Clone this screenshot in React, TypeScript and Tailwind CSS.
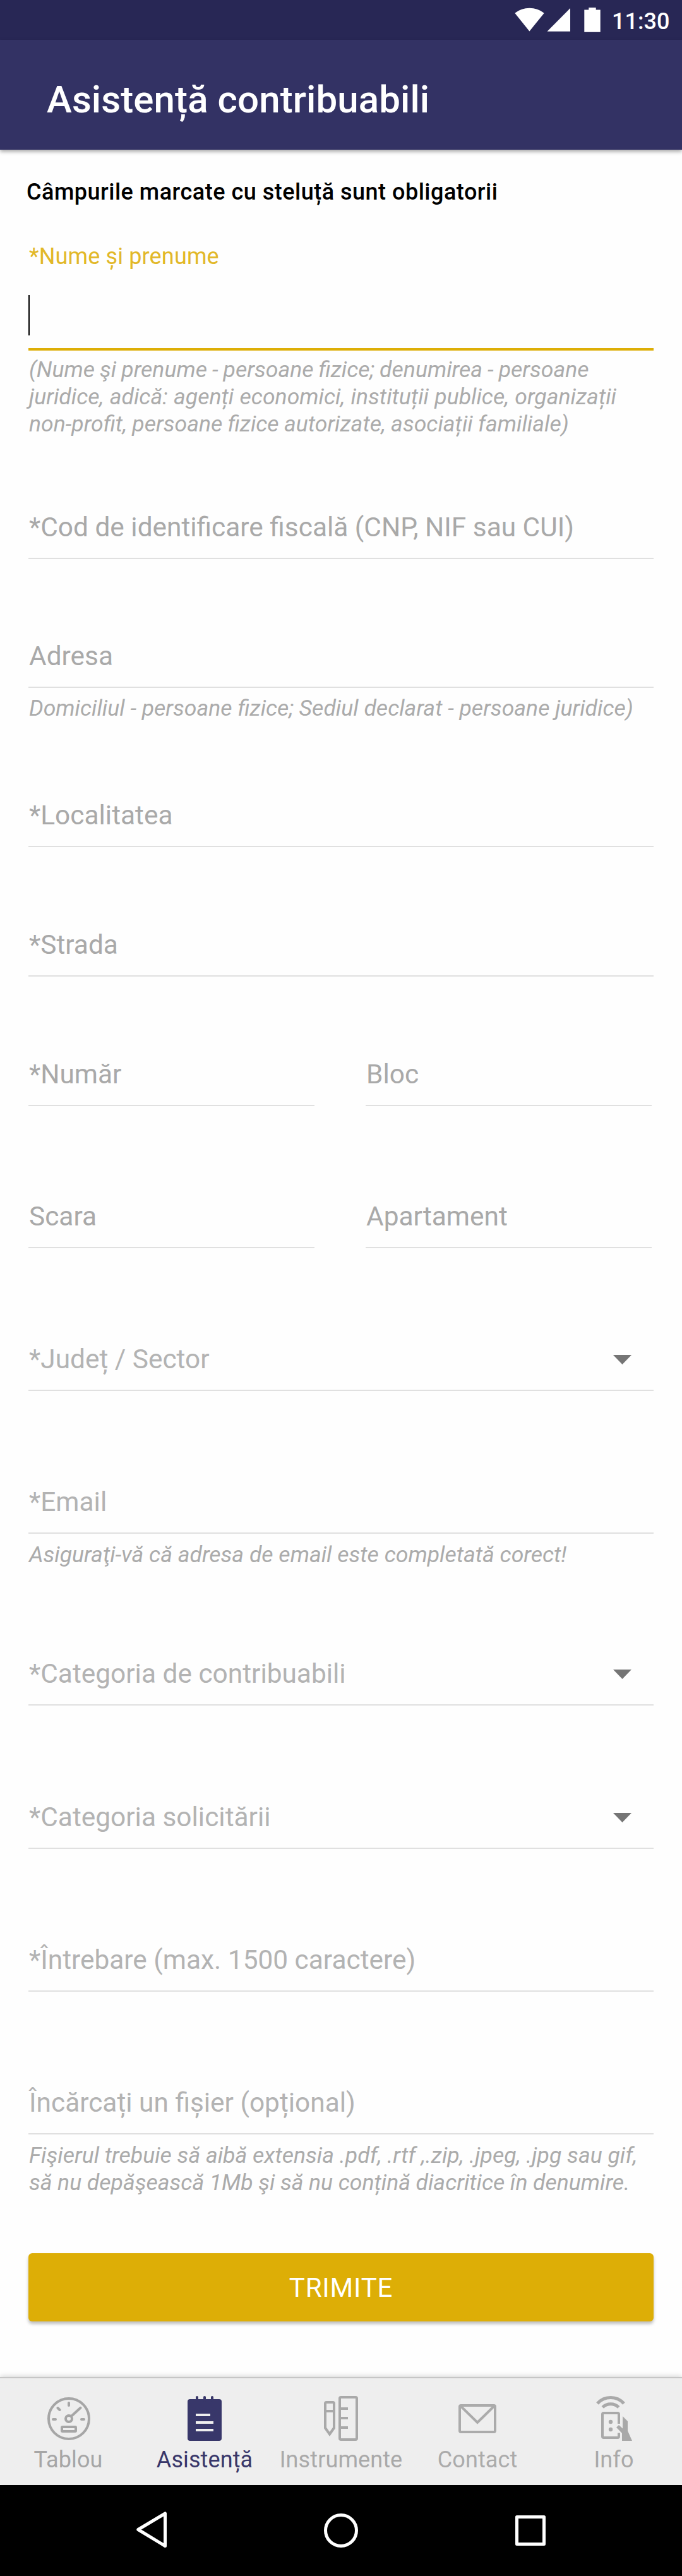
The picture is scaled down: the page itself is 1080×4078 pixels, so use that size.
import type { ReactNode } from "react";

function Field({
  label,
  className = "",
  tone = "text-[#a9a9a9]",
  select = false,
}: {
  label: string;
  className?: string;
  tone?: string;
  select?: boolean;
}) {
  return (
    <div className={`flex h-[75px] items-start justify-between border-b-2 border-[#e0e0e0] pl-px ${className}`}>
      <span className={`whitespace-nowrap text-[42.4px] leading-[50px] ${tone}`}>{label}</span>
      {select && (
        <svg width="29" height="15" viewBox="0 0 29 15" className="mt-[18px] mr-[35px]">
          <path d="M0 0H29L14.5 15Z" fill="#757575" />
        </svg>
      )}
    </div>
  );
}

function Hint({ children, className }: { children: ReactNode; className: string }) {
  return (
    <div className={`pl-px text-[35.6px] leading-[43px] whitespace-nowrap text-[#ababab] italic ${className}`}>
      {children}
    </div>
  );
}

function Tab({ label, tone, children }: { label: string; tone: string; children: ReactNode }) {
  return (
    <div className={`flex w-[216px] flex-col items-center pt-6 ${tone}`}>
      <svg width="80" height="80" viewBox="0 0 80 80" fill="none" stroke="currentColor" strokeWidth="4">
        {children}
      </svg>
      <span className="mt-1 text-[36px] leading-[42px] tracking-[0.1px]">{label}</span>
    </div>
  );
}

const LATE = "text-[#b3b3b3]";

export default function App() {
  return (
    <div className="flex h-[4078px] w-[1080px] flex-col overflow-hidden bg-[#fefefe] font-[Roboto,sans-serif]">
      <div className="flex h-[63px] shrink-0 justify-end bg-[#282755] pr-5 text-white">
        <svg width="136" height="63" viewBox="815 0 136 63" fill="#fff">
          <path d="M815.3 20.7A37.6 37.6 0 0 1 861.7 20.7L838.4 49.5Z" />
          <path d="M866.5 49.7L903 13V49.7Z" />
          <path d="M932.3 12H943.7V15.5H950.7V50.7H925.3V15.5H932.3Z" />
        </svg>
        <span className="mt-[13px] ml-[18px] w-[91px] text-[36px] leading-[42px] font-medium">11:30</span>
      </div>

      <header className="h-[174px] shrink-0 bg-[#333264] pt-[60px] pl-[74px] shadow-[0_3px_6px_rgba(0,0,0,0.35)]">
        <h1 className="text-[60px] leading-[70px] font-medium tracking-[0.1px] text-white">Asistență contribuabili</h1>
      </header>

      <main className="flex flex-col px-[45px]">
        <h2 className="mt-[46px] -ml-[3px] text-[36px] leading-[42px] font-medium tracking-[0.5px] text-black">
          Câmpurile marcate cu steluță sunt obligatorii
        </h2>

        <div className="mt-[60px] flex h-[170px] flex-col border-b-4 border-[#ddae06]">
          <label className="pl-px text-[36px] leading-[42px] tracking-[0.15px] text-[#e2b828]">*Nume și prenume</label>
          <div className="mt-10 h-16 w-0.5 bg-black" />
        </div>
        <Hint className="mt-[9px]">
          <p className="[word-spacing:-0.7px]">(Nume şi prenume - persoane fizice; denumirea - persoane</p>
          <p className="[word-spacing:0.6px]">juridice, adică: agenți economici, instituții publice, organizații</p>
          <p className="[word-spacing:-0.4px]">non-profit, persoane fizice autorizate, asociații familiale)</p>
        </Hint>

        <Field className="mt-[117px]" label="*Cod de identificare fiscală (CNP, NIF sau CUI)" />
        <Field className="mt-[129px]" label="Adresa" />
        <Hint className="mt-[11px]">
          <p>Domiciliul - persoane fizice; Sediul declarat - persoane juridice)</p>
        </Hint>
        <Field className="mt-[123px]" label="*Localitatea" />
        <Field className="mt-[130px]" label="*Strada" />
        <div className="mt-[130px] flex gap-[81px]">
          <Field className="w-[453px]" label="*Număr" />
          <Field className="w-[453px]" label="Bloc" />
        </div>
        <div className="mt-[150px] flex gap-[81px]">
          <Field className="w-[453px]" label="Scara" />
          <Field className="w-[453px]" label="Apartament" />
        </div>
        <Field className="mt-[151px]" label="*Județ / Sector" tone={LATE} select />
        <Field className="mt-[151px]" label="*Email" tone={LATE} />
        <Hint className="mt-3">
          <p>Asiguraţi-vă că adresa de email este completată corect!</p>
        </Hint>
        <Field className="mt-[142px]" label="*Categoria de contribuabili" tone={LATE} select />
        <Field className="mt-[152px]" label="*Categoria solicitării" tone={LATE} select />
        <Field className="mt-[151px]" label="*Întrebare (max. 1500 caractere)" tone={LATE} />
        <Field className="mt-[151px]" label="Încărcați un fișier (opțional)" tone={LATE} />
        <Hint className="mt-3">
          <p>Fişierul trebuie să aibă extensia .pdf, .rtf ,.zip, .jpeg, .jpg sau gif,</p>
          <p className="[word-spacing:-0.2px]">să nu depăşească 1Mb şi să nu conțină diacritice în denumire.</p>
        </Hint>

        <button className="mt-[90px] h-[108px] rounded-[6px] bg-[#ddae06] pt-0.5 text-[42px] leading-[50px] tracking-[0.8px] text-white shadow-[0_4px_5px_rgba(0,0,0,0.25)]">
          TRIMITE
        </button>
      </main>

      <nav className="mt-[88px] flex h-[170px] shrink-0 border-t-2 border-[#c6c6c6] bg-[#eeeeee] shadow-[0_-1px_8px_rgba(0,0,0,0.18)]">
        <Tab label="Tablou" tone="text-[#a6a6a6]">
          <circle cx="41" cy="40" r="32" />
          <circle cx="41" cy="40" r="5" />
          <path d="M45 36L59.5 22.8M41 15V19M16 41H20M61 41H65M23.5 23L26.5 26" strokeLinecap="round" />
          <rect x="30" y="53" width="22" height="7" rx="1" />
        </Tab>
        <Tab label="Asistență" tone="text-[#38376a]">
          <rect x="13" y="9" width="54" height="66" rx="4" fill="currentColor" stroke="none" />
          <path d="M28 6V12M40 6V12M52 6V12" strokeLinecap="round" />
          <path d="M26 34H49M26 46H54M26 58H54" stroke="#eeeeee" />
        </Tab>
        <Tab label="Instrumente" tone="text-[#a9a9a9]">
          <path d="M15 16a2 2 0 0 1 2-2H27a2 2 0 0 1 2 2V54.5L22 64.5L15 54.5ZM15 28H29" />
          <rect x="38" y="6" width="27" height="67" rx="2" />
          <path d="M38 24H51M38 39H51M38 54H51" />
        </Tab>
        <Tab label="Contact" tone="text-[#ababab]">
          <rect x="12" y="19" width="56" height="42" rx="2" />
          <path d="M13 19.5L40 46L67 19.5" />
        </Tab>
        <Tab label="Info" tone="text-[#a9a9a9]">
          <path d="M14 16A28 28 0 0 1 56 16M22.3 22A18 18 0 0 1 47.7 22" strokeWidth="5" />
          <path d="M48 48V33a2 2 0 0 0-2-2H24a2 2 0 0 0-2 2V68a2 2 0 0 0 2 2H46a2 2 0 0 0 2-2V62.5" />
          <g fill="currentColor" stroke="none">
            <circle cx="35" cy="45" r="3.2" />
            <circle cx="35" cy="57" r="3.2" />
            <path d="M54 36L62 44V59.3L69 75H53V63L44 53.7L48 50L54 55.5Z" />
          </g>
        </Tab>
      </nav>

      <div className="mt-px flex h-[144px] shrink-0 items-center bg-black px-[90px]">
        <svg width="300" height="144" viewBox="90 3934 300 144" fill="none" stroke="#fff" strokeWidth="5" strokeLinejoin="round">
          <path d="M261.5 3979V4030.5L218.8 4004.5Z" />
        </svg>
        <svg width="300" height="144" viewBox="390 3934 300 144" fill="none" stroke="#fff" strokeWidth="5">
          <circle cx="540" cy="4006" r="24.5" />
        </svg>
        <svg width="300" height="144" viewBox="690 3934 300 144" fill="none" stroke="#fff" strokeWidth="5" strokeLinejoin="round">
          <rect x="818.5" y="3984.5" width="43" height="43" />
        </svg>
      </div>
    </div>
  );
}
